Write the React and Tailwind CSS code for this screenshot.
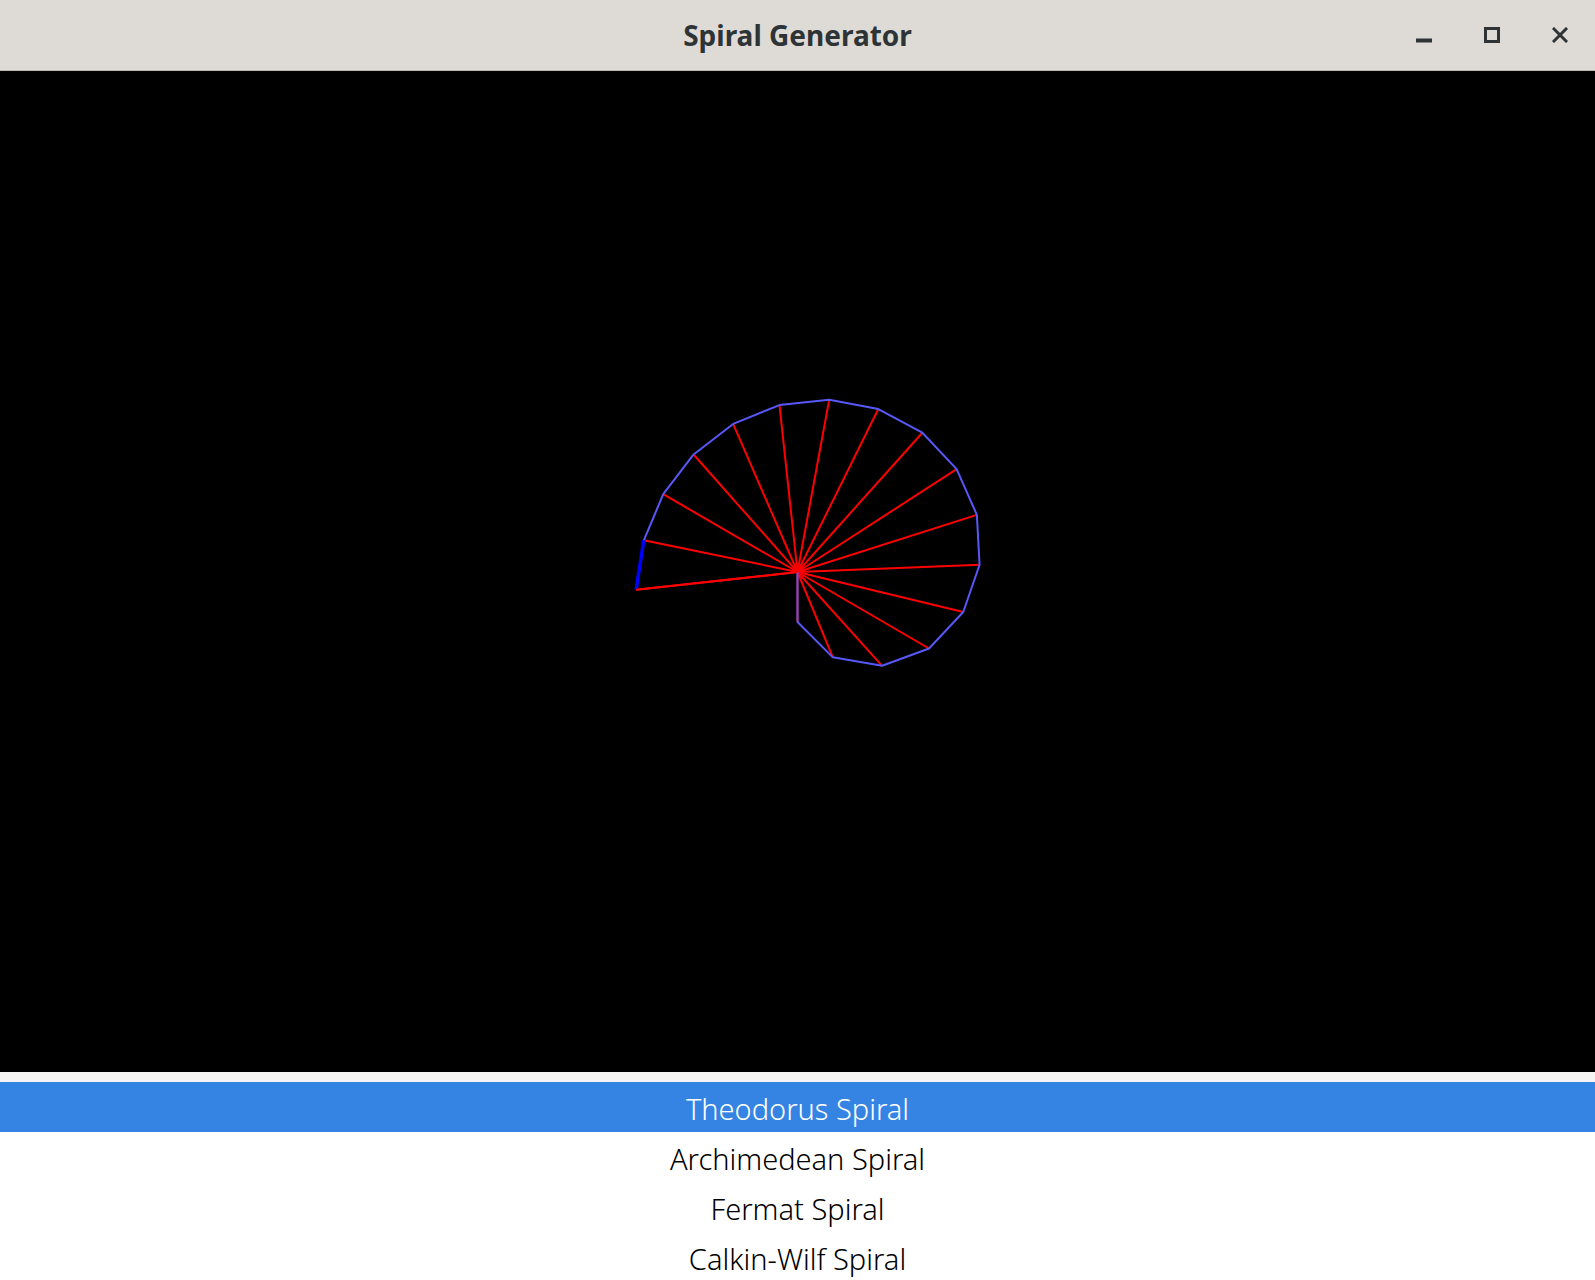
import React from "react";

function buildSpiral() {
  const U = 50;
  const pts = [[0, 0]];
  let th = Math.PI / 2;
  let x = 0, y = 0;
  for (let k = 0; k < 17; k++) {
    x += U * Math.cos(th);
    y += U * Math.sin(th);
    pts.push([x, y]);
    th -= Math.atan(1 / Math.sqrt(k + 1));
  }
  return pts;
}

function Spiral() {
  const cx = 797.5;
  const cy = 501;
  const pts = buildSpiral().map(([x, y]) => [cx + x, cy + y]);
  const last = pts.length - 1;
  const poly = pts.slice(0, last).map((p) => p.join(",")).join(" ");
  return (
    <svg width="1595" height="1001" viewBox="0 0 1595 1001" className="block">
      {pts.slice(1).map((p, i) => (
        <line key={i} x1={cx} y1={cy} x2={p[0]} y2={p[1]} stroke="#ff0000" strokeWidth="2" />
      ))}
      <polyline points={poly} fill="none" stroke="#5858f8" strokeWidth="2" strokeLinejoin="round" />
      <line x1={pts[last - 1][0]} y1={pts[last - 1][1]} x2={pts[last][0]} y2={pts[last][1]} stroke="#0000ff" strokeWidth="3.5" />
      <line x1={cx} y1={cy} x2={pts[last][0]} y2={pts[last][1]} stroke="#ff0000" strokeWidth="2" />
    </svg>
  );
}

const items = ["Theodorus Spiral", "Archimedean Spiral", "Fermat Spiral", "Calkin-Wilf Spiral"];

export default function App() {
  return (
    <div className="h-[1280px] w-[1595px] overflow-hidden flex flex-col bg-white" style={{ fontFamily: '"Noto Sans", "Open Sans", sans-serif' }}>
      <div className="h-[71px] shrink-0 grid grid-cols-[1fr_auto_1fr] items-center bg-[#dedbd7] border-b border-[#bdb7b0]">
        <div />
        <div className="text-[28px] font-bold text-[#2e3436] leading-none">Spiral Generator</div>
        <div className="flex justify-end pr-[1px] items-center">
          <div className="w-[68px] h-[16px] flex justify-center">
            <svg width="16" height="16" viewBox="0 0 16 16">
              <rect x="0" y="11.5" width="16" height="4" fill="#2e3436" />
            </svg>
          </div>
          <div className="w-[68px] h-[16px] flex justify-center">
            <svg width="16" height="16" viewBox="0 0 16 16">
              <rect x="1.5" y="1.5" width="13" height="13" fill="none" stroke="#2e3436" strokeWidth="3" />
            </svg>
          </div>
          <div className="w-[68px] h-[16px] flex justify-center">
            <svg width="16" height="16" viewBox="0 0 16 16">
              <path d="M2 2 L14 14 M14 2 L2 14" stroke="#2e3436" strokeWidth="3" strokeLinecap="square" />
            </svg>
          </div>
        </div>
      </div>
      <div className="h-[1001px] shrink-0 bg-black">
        <Spiral />
      </div>
      <div className="h-[10px] shrink-0 bg-[#f6f5f4]" />
      <div className="flex flex-col">
        {items.map((t, i) => (
          <div
            key={t}
            className={
              i === 0
                ? "h-[50px] shrink-0 flex items-center justify-center pt-[3px] bg-[#3584e4] text-white text-[29px] font-light"
                : "h-[50px] shrink-0 flex items-center justify-center pt-[3px] bg-white text-black text-[29px] font-light"
            }
          >
            {t}
          </div>
        ))}
      </div>
    </div>
  );
}
